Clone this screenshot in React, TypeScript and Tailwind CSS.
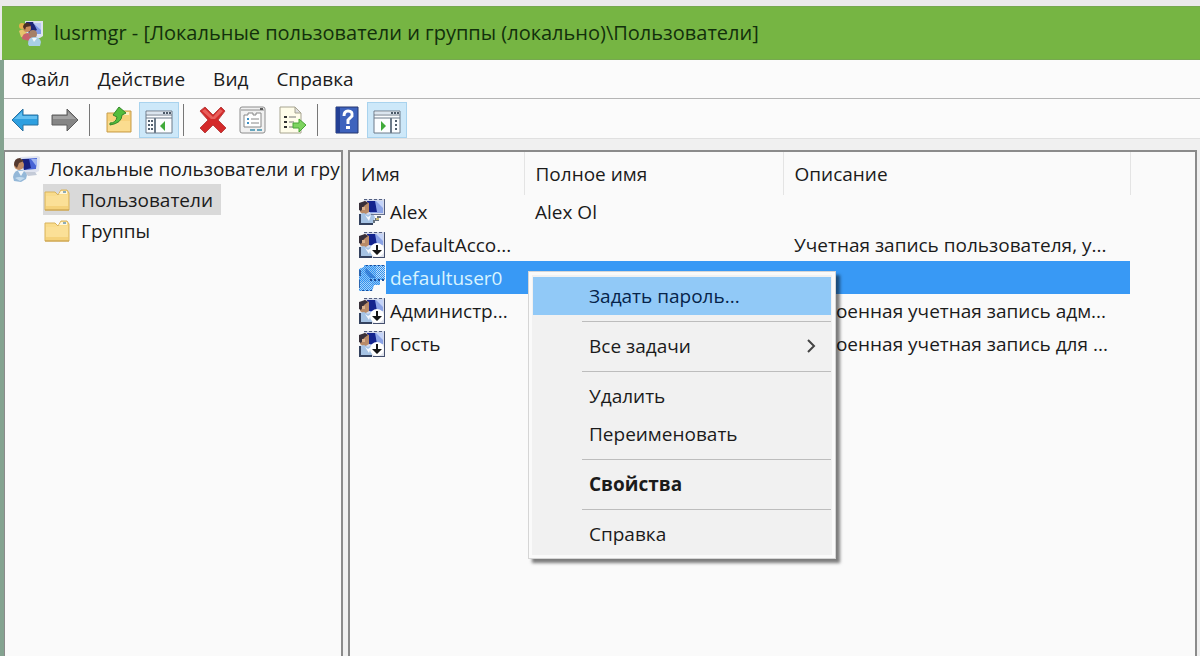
import React from 'react';
import { clsx } from 'clsx';

type UserKind = 'active' | 'disabled' | 'selected';

interface User {
  name: string;
  fullName: string;
  description: string;
  kind: UserKind;
}

const users: User[] = [
  { name: 'Alex', fullName: 'Alex Ol', description: '', kind: 'active' },
  { name: 'DefaultAcco...', fullName: '', description: 'Учетная запись пользователя, у...', kind: 'disabled' },
  { name: 'defaultuser0', fullName: 'defaultuser0', description: '', kind: 'selected' },
  { name: 'Администр...', fullName: '', description: 'Встроенная учетная запись адм...', kind: 'disabled' },
  { name: 'Гость', fullName: '', description: 'Встроенная учетная запись для ...', kind: 'disabled' },
];

const menus = ['Файл', 'Действие', 'Вид', 'Справка'];

function GroupIcon() {
  return (
    <svg className="h-7 w-7 shrink-0" viewBox="0 0 28 28" aria-hidden="true">
      <path d="M7 2h18v15l-3 2H9z" fill="#dde3ef" />
      <path d="M9 4h14v11H11z" fill="#7f9be6" />
      <path d="M8 3h7l4 8-8 4z" fill="#1c2677" />
      <path d="M15 4h8v7z" fill="#b9c9f3" />
      <circle cx="4" cy="7" r="3" fill="#e3b04c" />
      <path d="M1 12q3-3 7 0v7l-5-1z" fill="#e6c36d" />
      <circle cx="9" cy="9" r="4" fill="#c98d5c" />
      <path d="M5 8q1-5 6-4l2 3-5 1-1 3z" fill="#4b2f25" />
      <path d="M4 20q0-6 6-6 4 1 4 5l-3 3z" fill="#c8626c" />
      <circle cx="15" cy="15" r="4" fill="#a58068" />
      <path d="M10 25q0-7 6-7t7 5l-1 4H11z" fill="#a8cfe6" />
      <path d="M14 19l2 4 3-4z" fill="#f3f8fb" />
    </svg>
  );
}

function ComputerUserIcon() {
  return (
    <svg className="h-7 w-7 shrink-0" viewBox="0 0 28 28" aria-hidden="true">
      <path d="M7 2l18-1 2 1-1 14-4 2H9z" fill="#dfe3ef" />
      <path d="M9 4l15-1-1 11-12 1z" fill="#4763d6" />
      <path d="M9 4h7l2 9-7 2z" fill="#17207e" />
      <path d="M18 4h6v8z" fill="#9fb4f1" />
      <path d="M12 17h10l2 3-9 1z" fill="#c4cbd8" />
      <circle cx="6" cy="10" r="5" fill="#bf8a63" />
      <path d="M1 10q0-7 6-7l4 3-5 2-2 5z" fill="#54392f" />
      <path d="M0 22q1-7 7-7 5 0 7 5l-1 4-5 3-7-1z" fill="#94b8d8" />
      <path d="M5 16l3 5 3-5z" fill="#f0f6fb" />
      <path d="M2 23q4-2 10 0l-5 3z" fill="#c3dbee" />
    </svg>
  );
}

function UserIcon({ kind }: { kind: UserKind }) {
  if (kind === 'selected') {
    return (
      <svg className="h-7 w-7 shrink-0" viewBox="0 0 28 28" aria-hidden="true">
        <defs>
          <pattern id="dither" width="2" height="2" patternUnits="userSpaceOnUse">
            <path d="M0 0h1v1H0zM1 1h1v1H1z" fill="#3391ee" />
          </pattern>
          <pattern id="dots" width="4" height="2" patternUnits="userSpaceOnUse">
            <path d="M0 0h2v2H0z" fill="#1d4f9c" />
          </pattern>
        </defs>
        <path d="M6 1h21v15h-5v5h-6l-2 6H1V5l5-2z" fill="#8cc4f6" />
        <path d="M18 2h9v12h-9z" fill="#c3e0fa" />
        <path d="M1 18h13v8H1z" fill="#a7d3f8" />
        <path d="M6 1h21v15h-5v5h-6l-2 6H1V5l5-2z" fill="url(#dither)" />
        <path d="M8 4l10 10h-6L7 8z" fill="#1a62c4" fillOpacity="0.6" />
        <path d="M6 1h20v1H6zM12 15h14v2H12zM2 26h12v1H2z" fill="url(#dots)" />
        <path d="M1 6h2v6H1zM1 16h1v8H1z" fill="#2d65ae" />
      </svg>
    );
  }
  return (
    <svg className="h-7 w-7 shrink-0" viewBox="0 0 28 28" aria-hidden="true">
      <path d="M6 1h21v16H16v2H6z" fill="#d3d9ea" />
      <path d="M6 1h3v1H6zM11 1h3v1h-3zM16 1h3v1h-3zM21 1h3v1h-3zM26 1h1v16h-1z" fill="#535f80" />
      <path d="M9 3h16v12H12z" fill="#8ba3e6" />
      <path d="M9 3h8l2 11h-8z" fill="#14248e" />
      <path d="M18 3h7v7z" fill="#c4d3f8" />
      <path d="M2 6l5-3 4 2v9l-5 3-4-3z" fill="#b98b68" />
      <path d="M1 5l6-2 3 2-4 3-3 5-2-1z" fill="#38303a" />
      <path d="M4 9h3v3H4z" fill="#ddb38d" />
      <path d="M1 16l5-1 4 2 4-2 3 4-2 7H1z" fill="#a6c3e4" />
      <path d="M1 16h2v10H1zM1 25h14v2H1z" fill="#34425f" />
      <path d="M7 17l3 2 3-2-2 6z" fill="#f5f8fd" />
      {kind === 'disabled' ? (
        <g>
          <path d="M14 14h13v13H14z" fill="#dfe3ec" />
          <circle cx="19" cy="19" r="7" fill="#fff" />
          <path d="M26 2h1v25H15v-1h11z" fill="#45506e" />
          <path d="M18 14h2v5h4l-5 5-5-5h4z" fill="#151515" />
        </g>
      ) : (
        <g>
          <path d="M13 16h13v1H13z" fill="#68738f" />
          <path d="M17 20h2v-2h4v2h-2v3h-4v2h-2v-3h2z" fill="#65717d" />
          <path d="M18 20h3v2h-3z" fill="#c7bb79" />
        </g>
      )}
    </svg>
  );
}

function FolderIcon() {
  return (
    <svg className="h-7 w-7 shrink-0" viewBox="0 0 28 28" aria-hidden="true">
      <path d="M2 6h10l3 3 3-5h6l2 3v17H2z" fill="#f9dc8c" stroke="#d9b35d" />
      <path d="M16 8l2-3h6v3z" fill="#fff7dc" />
      <path d="M20 5h3v2h-3z" fill="#8eacb8" />
      <path d="M3 10h9l3-1h10v14H3z" fill="#fbe097" />
      <path d="M3 20h22v3H3z" fill="#f5d27b" />
      <path d="M2 24h24" stroke="#c99f49" />
    </svg>
  );
}

function ArrowIcon({ forward }: { forward?: boolean }) {
  return forward ? (
    <svg className="h-7 w-7" viewBox="0 0 28 28" aria-hidden="true">
      <path d="M27 14L16 3v6H1v10h15v6z" fill="#858585" stroke="#5c5c5c" />
      <path d="M2 10h15V6l8 7H2z" fill="#a3a3a3" />
    </svg>
  ) : (
    <svg className="h-7 w-7" viewBox="0 0 28 28" aria-hidden="true">
      <path d="M1 14L12 3v6h15v10H12v6z" fill="#2d9fe0" stroke="#28709f" />
      <path d="M3 13l8-7v4h15v3z" fill="#63bff0" />
    </svg>
  );
}

function UpFolderIcon() {
  return (
    <svg className="h-7 w-7" viewBox="0 0 28 28" aria-hidden="true">
      <path d="M2 7h9l3-2h12v21H2z" fill="#f8d27c" stroke="#c79d4b" />
      <path d="M3 15h22v10H3z" fill="#fbdc8f" />
      <path d="M19 6h5v3h-5z" fill="#fff1c4" />
      <path d="M5 17q6 0 7-6L8 9l6-8 7 6-4 2q0 8-12 10z" fill="#54bd3c" stroke="#33882a" />
    </svg>
  );
}

function PaneIcon({ right }: { right?: boolean }) {
  return (
    <svg className="h-7 w-7" viewBox="0 0 28 28" aria-hidden="true">
      <path d="M1 5h26v22H1z" fill="#fbfdff" stroke="#6d7b8a" />
      <path d="M2 6h24v2H2z" fill="#dbe5ef" />
      <path d="M1 9h26M1 12h26" stroke="#6d7b8a" />
      <path d="M18 7h2M21 7h2M24 7h2" stroke="#4c5968" strokeWidth="2" />
      {right ? (
        <g>
          <path d="M18 12v15" stroke="#6d7b8a" strokeWidth="2" />
          <path d="M22 15h2M22 19h2M22 23h2" stroke="#52606f" strokeWidth="2" />
          <path d="M8 15l5 5-5 5z" fill="#3faa3b" />
        </g>
      ) : (
        <g>
          <path d="M10 12v15" stroke="#6d7b8a" strokeWidth="2" />
          <path d="M3 15h2M6 15h2M3 19h2M6 19h2M3 23h2M6 23h2" stroke="#52606f" strokeWidth="2" />
          <path d="M20 15l-5 5 5 5z" fill="#3faa3b" />
        </g>
      )}
    </svg>
  );
}

function DeleteIcon() {
  return (
    <svg className="h-7 w-7" viewBox="0 0 28 28" aria-hidden="true">
      <path d="M1 5l5-4 8 8 8-8 4 4-7 9 8 8-5 5-8-8-8 8-5-5 8-8z" fill="#d42a2a" stroke="#b94444" />
      <path d="M3 5l3-2 8 8 7-8 3 2-8 8H12z" fill="#e8605c" />
    </svg>
  );
}

function PropertiesIcon() {
  return (
    <svg className="h-7 w-7" viewBox="0 0 28 28" aria-hidden="true">
      <rect x="1" y="1" width="25" height="26" rx="2" fill="#f1f1f1" stroke="#8c8c8c" />
      <path d="M2 4h23" stroke="#8c8c8c" />
      <path d="M21 2h3v2h-3z" fill="#5c5c5c" />
      <path d="M5 9h4V7h5v2h3V7h5v14H5z" fill="#fff" stroke="#888" />
      <path d="M8 13h2M8 17h2" stroke="#3d8fc4" strokeWidth="2" />
      <path d="M12 13h8M12 17h8" stroke="#888" />
      <path d="M11 24h5M18 24h5" stroke="#68a6bd" strokeWidth="2" />
    </svg>
  );
}

function ExportIcon() {
  return (
    <svg className="h-7 w-7" viewBox="0 0 28 28" aria-hidden="true">
      <path d="M1 1h15l6 6v20H1z" fill="#fffdea" stroke="#a7a490" />
      <path d="M16 1v6h6z" fill="#ddd" stroke="#a7a490" />
      <path d="M5 11h3M5 16h3M5 21h3" stroke="#333" strokeWidth="2" />
      <path d="M10 11h7M10 16h5M10 21h4" stroke="#777" />
      <path d="M14 17h6v-4l7 6-7 7v-4h-6z" fill="#7dd35f" stroke="#48a638" />
    </svg>
  );
}

function HelpIcon() {
  return (
    <svg className="h-7 w-7" viewBox="0 0 28 28" aria-hidden="true">
      <path d="M3 1h22v26H3z" fill="#3e63bd" stroke="#24366f" />
      <path d="M3 1h4v26H3z" fill="#233f94" />
      <path d="M11 10q0-5 4-5 5 0 4 5l-4 4v4" fill="none" stroke="#fff" strokeWidth="3" />
      <path d="M13 20h4v3h-4z" fill="#fff" />
    </svg>
  );
}

interface ToolButtonProps {
  label: string;
  pressed?: boolean;
  children: React.ReactNode;
}

function ToolButton({ label, pressed, children }: ToolButtonProps) {
  return (
    <button
      type="button"
      aria-label={label}
      aria-pressed={pressed}
      className={clsx(
        'flex h-9 w-10 items-center justify-center border',
        pressed ? 'border-[#a9d3ee] bg-[#cde8f9]' : 'border-transparent'
      )}
    >
      {children}
    </button>
  );
}

function ToolDivider() {
  return <div className="mr-[9px] ml-1 h-8 w-px bg-[#777]" />;
}

function Toolbar() {
  return (
    <div className="flex h-10 items-center border-b border-[#e0e0e0] bg-[#fbfbfb] pt-[3px] pl-px">
      <ToolButton label="Назад"><ArrowIcon /></ToolButton>
      <ToolButton label="Вперед"><ArrowIcon forward /></ToolButton>
      <ToolDivider />
      <ToolButton label="Вверх"><UpFolderIcon /></ToolButton>
      <ToolButton label="Дерево консоли" pressed><PaneIcon /></ToolButton>
      <ToolDivider />
      <ToolButton label="Удалить"><DeleteIcon /></ToolButton>
      <ToolButton label="Свойства"><PropertiesIcon /></ToolButton>
      <ToolButton label="Экспорт"><ExportIcon /></ToolButton>
      <ToolDivider />
      <ToolButton label="Справка"><HelpIcon /></ToolButton>
      <ToolButton label="Панель действий" pressed><PaneIcon right /></ToolButton>
    </div>
  );
}

function Tree() {
  return (
    <nav className="w-[339px] shrink-0 overflow-hidden border-t-2 border-r-2 border-l border-[#8b8b8b] bg-[#fafafa] pt-[3px] pl-2">
      <button type="button" className="flex h-7 items-center gap-2 whitespace-nowrap">
        <ComputerUserIcon />
        Локальные пользователи и группы (локально)
      </button>
      <ul className="pt-px pl-[30px]">
        <li>
          <button type="button" className="flex h-[31px] items-center gap-[10px] bg-[#d9d9d9] pr-2">
            <FolderIcon />
            Пользователи
          </button>
        </li>
        <li>
          <button type="button" className="flex h-[31px] items-center gap-[10px]">
            <FolderIcon />
            Группы
          </button>
        </li>
      </ul>
    </nav>
  );
}

function UserTable() {
  return (
    <table className="w-[780px] table-fixed border-collapse text-left">
      <colgroup>
        <col className="w-[174px]" />
        <col className="w-[259px]" />
        <col className="w-[347px]" />
      </colgroup>
      <thead>
        <tr className="h-[43px]">
          {['Имя', 'Полное имя', 'Описание'].map((title) => (
            <th key={title} className="border-r border-[#e4e4e4] p-0 pl-[11px] font-normal">{title}</th>
          ))}
        </tr>
      </thead>
      <tbody>
        {users.map((user) => {
          const selected = user.kind === 'selected';
          return (
            <tr key={user.name} className="h-[33px] whitespace-nowrap">
              <td className="p-0 pl-2">
                <div className="flex h-[33px] items-center">
                  <UserIcon kind={user.kind} />
                  <span className={clsx('flex h-full flex-1 items-center pl-1', selected && 'bg-[#3899f5] text-[#d8f4ff]')}>
                    {user.name}
                  </span>
                </div>
              </td>
              <td className={clsx('p-0 pl-[11px]', selected && 'bg-[#3899f5] text-[#d8f4ff]')}>{user.fullName}</td>
              <td className={clsx('p-0 pl-[11px]', selected && 'bg-[#3899f5]')}>{user.description}</td>
            </tr>
          );
        })}
      </tbody>
    </table>
  );
}

interface MenuItemProps {
  label: string;
  active?: boolean;
  bold?: boolean;
  submenu?: boolean;
}

function MenuItem({ label, active, bold, submenu }: MenuItemProps) {
  return (
    <button
      type="button"
      role="menuitem"
      className={clsx(
        'flex h-[38px] w-full items-center justify-between pr-3 pl-14',
        active && 'bg-[#91c9f7] text-[#06244a]',
        bold && 'font-bold'
      )}
    >
      {label}
      {submenu && (
        <svg className="h-4 w-4" viewBox="0 0 16 16" aria-hidden="true">
          <path d="M5 2l6 6-6 6" fill="none" stroke="#444" strokeWidth="2" />
        </svg>
      )}
    </button>
  );
}

function MenuDivider() {
  return (
    <div role="separator" className="flex h-3 items-center pl-[49px]">
      <div className="h-px flex-1 bg-[#bdbdbd]" />
    </div>
  );
}

function ContextMenu() {
  return (
    <div
      role="menu"
      className="absolute top-[119px] left-[178px] w-[308px] border border-[#d5d5d5] bg-[#f1f1f1] px-1 py-[5px] shadow-[4px_4px_3px_rgba(0,0,0,0.5)] outline-3 -outline-offset-4 outline-[#fafafa]"
    >
      <MenuItem label="Задать пароль..." active />
      <MenuDivider />
      <MenuItem label="Все задачи" submenu />
      <MenuDivider />
      <MenuItem label="Удалить" />
      <MenuItem label="Переименовать" />
      <MenuDivider />
      <MenuItem label="Свойства" bold />
      <MenuDivider />
      <MenuItem label="Справка" />
    </div>
  );
}

export default function App() {
  return (
    <div className="flex min-h-screen flex-col bg-[#eaeaea] pt-[6px] font-['Open_Sans','Noto_Sans',sans-serif] text-[19px] leading-7 text-[#1b1b1b]">
      <header className="ml-[2px] flex h-[54px] items-center gap-2 border-y border-[#76a84f] bg-[#76b543] pl-4 text-[#12300c]">
        <GroupIcon />
        <h1 className="text-xl">lusrmgr - [Локальные пользователи и группы (локально)\Пользователи]</h1>
      </header>
      <div className="flex flex-1 flex-col border-l-4 border-[#84a390] bg-[#f0f0f0]">
        <div role="menubar" className="flex h-[39px] items-center gap-7 border-b border-[#b5b5b5] bg-[#fbfbfb] pl-[17px]">
          {menus.map((menu) => (
            <button key={menu} type="button" role="menuitem">{menu}</button>
          ))}
        </div>
        <Toolbar />
        <div className="flex flex-1 pt-[11px] pr-[3px]">
          <Tree />
          <main className="relative ml-[5px] flex-1 border-x-2 border-t-2 border-[#8b8b8b] bg-[#fafafa]">
            <UserTable />
            <ContextMenu />
          </main>
        </div>
      </div>
    </div>
  );
}
